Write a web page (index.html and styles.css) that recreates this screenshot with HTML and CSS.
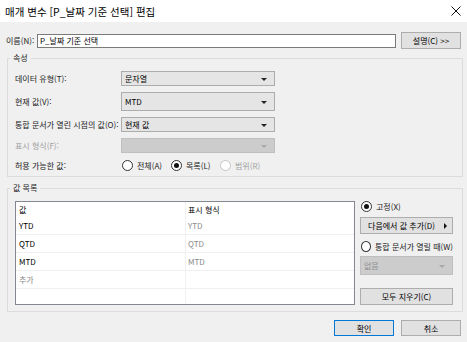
FILE: index.html
```html
<!DOCTYPE html>
<html lang="ko">

<head>
  <meta charset="UTF-8">
  <title>매개 변수 편집</title>
  <link rel="stylesheet" href="styles.css">
</head>

<body>
  <div class="titlebar">
    <span class="title">매개 변수 [P_날짜 기준 선택] 편집</span>
    <svg class="close" width="10" height="10" viewBox="0 0 10 10">
      <path d="M0.5 0.5 L9.5 9.5 M9.5 0.5 L0.5 9.5" stroke="#111" stroke-width="1" fill="none" />
    </svg>
  </div>

  <div class="content">
    <!-- Name -->
    <div class="name-row">
      <span class="name-label">이름(N):</span>
      <div class="textbox">P_날짜 기준 선택</div>
      <button class="btn btn-desc">설명(C) &gt;&gt;</button>
    </div>

    <!-- Properties -->
    <fieldset class="group props">
      <legend>속성</legend>
      <div class="prop-grid">
        <span class="prop-label">데이터 유형(T):</span>
        <div class="combo">문자열</div>

        <span class="prop-label">현재 값(V):</span>
        <div class="combo">MTD</div>

        <span class="prop-label">통합 문서가 열린 시점의 값(O):</span>
        <div class="combo">현재 값</div>

        <span class="prop-label disabled">표시 형식(F):</span>
        <div class="combo combo-disabled"></div>

        <span class="prop-label">허용 가능한 값:</span>
        <div class="radio-row">
          <span class="radio"><span class="dot"></span>전체(A)</span>
          <span class="radio checked"><span class="dot"></span>목록(L)</span>
          <span class="radio disabled"><span class="dot"></span>범위(R)</span>
        </div>
      </div>
    </fieldset>

    <!-- Value list -->
    <fieldset class="group values">
      <legend>값 목록</legend>
      <div class="values-body">
        <div class="value-table">
          <div class="cell head">값</div>
          <div class="cell head col2">표시 형식</div>
          <div class="cell">YTD</div>
          <div class="cell col2 muted">YTD</div>
          <div class="cell">QTD</div>
          <div class="cell col2 muted">QTD</div>
          <div class="cell">MTD</div>
          <div class="cell col2 muted">MTD</div>
          <div class="cell muted">추가</div>
          <div class="cell col2"></div>
          <div class="cell last"></div>
          <div class="cell col2 last"></div>
        </div>

        <div class="side">
          <span class="radio checked side-radio"><span class="dot"></span>고정(X)</span>
          <button class="btn btn-add">다음에서 값 추가(D)<span class="tri-right"></span></button>
          <span class="radio side-radio second"><span class="dot"></span>통합 문서가 열릴 때(W)</span>
          <div class="combo combo-disabled side-combo">없음</div>
          <button class="btn btn-clear">모두 지우기(C)</button>
        </div>
      </div>
    </fieldset>

    <div class="footer">
      <button class="btn btn-ok">확인</button>
      <button class="btn">취소</button>
    </div>
  </div>
</body>

</html>
```

FILE: styles.css
```css
body {
  margin: 0;
  width: 467px;
  height: 342px;
  overflow: hidden;
  background: #f0f0f0;
  font-family: "Noto Sans CJK KR", sans-serif;
  font-size: 8px;
  color: #1a1a1a;
}

.titlebar {
  height: 22px;
  background: #fff;
  display: flex;
  align-items: center;
  justify-content: space-between;
  padding: 0 6px 0 5px;
}

.title {
  font-size: 10.5px;
  color: #000;
}

.content {
  padding: 10px 0 0 6px;
}

.name-row {
  display: flex;
  align-items: center;
  height: 17px;
}

.name-label {
  width: 31px;
}

.textbox {
  width: 359px;
  height: 14px;
  box-sizing: border-box;
  border: 1px solid #7a7a7a;
  background: #fff;
  padding-left: 2px;
  line-height: 12px;
  color: #000;
}

.btn {
  font-family: "Noto Sans CJK KR", sans-serif;
  font-size: 8px;
  color: #000;
  background: #e1e1e1;
  border: 1px solid #adadad;
  height: 17px;
  padding: 0;
  box-sizing: border-box;
}

.btn-desc {
  width: 60px;
  margin-left: 5px;
}

.group {
  margin: 3px 0 0 1px;
  width: 456px;
  box-sizing: border-box;
  border: 1px solid #dcdcdc;
  padding: 7px 0 5px 7px;
}

.group legend {
  padding: 0 3px;
  margin-left: -5px;
  line-height: 12px;
}

.prop-grid {
  display: grid;
  grid-template-columns: 106px 154px;
  grid-template-rows: 15px 19px 15px 15px 12px;
  row-gap: 6px;
  align-items: center;
}

.prop-label.disabled {
  color: #a0a0a0;
}

.combo {
  position: relative;
  height: 100%;
  box-sizing: border-box;
  background: #e5e5e5;
  border: 1px solid #acacac;
  padding-left: 3px;
  display: flex;
  align-items: center;
  color: #000;
}

.combo::after {
  content: "";
  position: absolute;
  right: 7px;
  top: 50%;
  margin-top: -1px;
  border-left: 3px solid transparent;
  border-right: 3px solid transparent;
  border-top: 3px solid #222;
}

.combo-disabled {
  background: #cccccc;
  border-color: #bfbfbf;
  color: #8d8d8d;
}

.combo-disabled::after {
  border-top-color: #a8a8a8;
}

.radio-row {
  display: flex;
  align-items: center;
  padding-left: 1px;
}

.radio {
  display: flex;
  align-items: center;
  gap: 4px;
  width: 49px;
  white-space: nowrap;
}

.radio .dot {
  width: 11px;
  height: 11px;
  box-sizing: border-box;
  border: 1px solid #333;
  border-radius: 50%;
  background: #fff;
  display: flex;
  align-items: center;
  justify-content: center;
}

.radio.checked .dot::after {
  content: "";
  width: 5px;
  height: 5px;
  border-radius: 50%;
  background: #111;
}

.radio.disabled {
  color: #a0a0a0;
}

.radio.disabled .dot {
  border-color: #c4c4c4;
}

.values {
  margin-top: 5px;
  padding: 7px 0 6px 7px;
}

.values-body {
  display: flex;
  gap: 5px;
}

.value-table {
  width: 340px;
  height: 104px;
  box-sizing: border-box;
  border: 1px solid #828790;
  background: #fff;
  display: grid;
  grid-template-columns: 169px 169px;
  grid-template-rows: 15px 18px 18px 18px 18px 15px;
}

.cell {
  display: flex;
  align-items: center;
  padding-left: 3px;
  border-bottom: 1px solid #f0f0f0;
  color: #000;
}

.cell.head {
  border-bottom: none;
}

.cell.col2 {
  border-left: 1px solid #f0f0f0;
  padding-left: 2px;
}

.cell.last {
  border-bottom: none;
}

.cell.muted {
  color: #8a8a8a;
}

.side {
  width: 93px;
  display: flex;
  flex-direction: column;
}

.side-radio {
  width: auto;
  height: 12px;
  margin-top: -1px;
  padding-left: 1px;
}

.side-radio.second {
  margin-top: 6px;
}

.btn-add {
  position: relative;
  margin-top: 5px;
  width: 93px;
  padding-right: 10px;
}

.tri-right {
  position: absolute;
  right: 5px;
  top: 50%;
  margin-top: -3px;
  border-top: 3px solid transparent;
  border-bottom: 3px solid transparent;
  border-left: 3px solid #111;
}

.side-combo {
  height: 19px;
  margin-top: 4px;
}

.btn-clear {
  margin-top: auto;
  width: 93px;
}

.footer {
  display: flex;
  justify-content: flex-end;
  gap: 7px;
  margin-top: 8px;
  padding-right: 6px;
}

.footer .btn {
  width: 60px;
  height: 16px;
}

.footer .btn-ok {
  border-color: #0078d7;
}
```
